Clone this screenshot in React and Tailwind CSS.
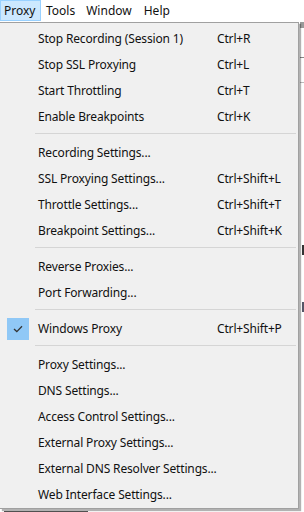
import React from "react";

const groups = [
  [
    ["Stop Recording (Session 1)", "Ctrl+R"],
    ["Stop SSL Proxying", "Ctrl+L"],
    ["Start Throttling", "Ctrl+T"],
    ["Enable Breakpoints", "Ctrl+K"],
  ],
  [
    ["Recording Settings...", ""],
    ["SSL Proxying Settings...", "Ctrl+Shift+L"],
    ["Throttle Settings...", "Ctrl+Shift+T"],
    ["Breakpoint Settings...", "Ctrl+Shift+K"],
  ],
  [
    ["Reverse Proxies...", ""],
    ["Port Forwarding...", ""],
  ],
  [["Windows Proxy", "Ctrl+Shift+P", true]],
  [
    ["Proxy Settings...", ""],
    ["DNS Settings...", ""],
    ["Access Control Settings...", ""],
    ["External Proxy Settings...", ""],
    ["External DNS Resolver Settings...", ""],
    ["Web Interface Settings...", ""],
  ],
];

function Row({ label, shortcut, checked }) {
  return (
    <div className="flex h-[26px] items-center">
      <div className="flex w-[38px] shrink-0 items-center pl-[7px]">
        {checked && (
          <div className="flex h-[22px] w-[22px] items-center justify-center bg-[#90c8f6]">
            <svg width="10" height="8" viewBox="0 0 10 8">
              <path d="M1 4 L3.8 6.6 L9 1.2" fill="none" stroke="#333" strokeWidth="1.3" />
            </svg>
          </div>
        )}
      </div>
      <div className="w-[179px] shrink-0 whitespace-nowrap tracking-[-0.15px]">{label}</div>
      <div className="whitespace-nowrap tracking-[-0.15px]">{shortcut}</div>
    </div>
  );
}

function Sep() {
  return (
    <div className="h-[10px] pl-[35px] pr-[2px] pt-[3px]">
      <div className="h-px bg-[#d5d5d5]" />
    </div>
  );
}

export default function App() {
  return (
    <div
      className="relative h-[512px] w-[304px] overflow-hidden bg-white text-[12px] text-[#111]"
      style={{ fontFamily: '"Noto Sans", "Noto Sans CJK KR", sans-serif' }}
    >
      {/* menu bar */}
      <div className="flex h-[22px] items-start bg-white">
        <div className="flex h-[21px] w-[41px] items-center border border-[#99d1ff] bg-[#cce8ff] pl-[3px]">
          Proxy
        </div>
        <div className="ml-[5px] flex h-[21px] items-center">Tools</div>
        <div className="ml-[11px] flex h-[21px] items-center">Window</div>
        <div className="ml-[12px] flex h-[21px] items-center">Help</div>
      </div>

      {/* background app bits */}
      <div className="absolute right-0 top-[22px] h-[6px] w-[4px] bg-[#9a9a9a]" />
      <div className="absolute right-0 top-[57px] h-px w-[4px] bg-[#888]" />
      <div className="absolute right-0 top-[82px] h-px w-[4px] bg-[#bbb]" />
      <div className="absolute right-0 top-[245px] h-[10px] w-[2px] bg-[#333]" />
      <div className="absolute right-0 top-[302px] h-[10px] w-[2px] bg-[#556]" />
      <div className="absolute bottom-0 left-[4px] h-[1px] w-[84px] bg-[#555]" />

      {/* drop-down */}
      <div className="absolute left-0 top-[22px] w-[301px] pb-[2px] pr-[2px]">
        <div className="relative h-[487px] w-[299px] border border-l-0 border-[#a0a0a0] bg-[#f0f0f0] pt-[3px] shadow-[2px_2px_1px_rgba(0,0,0,0.3)]">
          {groups.map((g, gi) => (
            <React.Fragment key={gi}>
              {gi > 0 && <Sep />}
              {g.map(([l, s, c]) => (
                <Row key={l} label={l} shortcut={s} checked={c} />
              ))}
            </React.Fragment>
          ))}
        </div>
      </div>
    </div>
  );
}
